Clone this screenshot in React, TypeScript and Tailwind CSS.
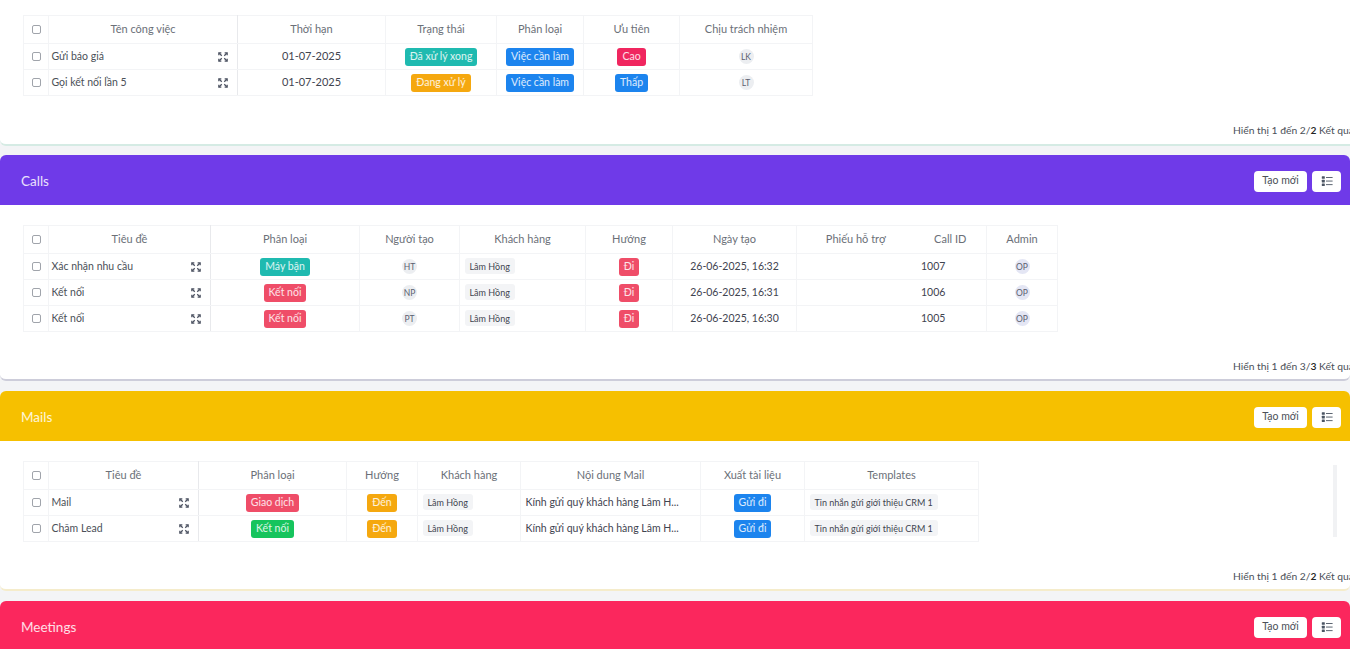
import type { ReactNode } from 'react';

function Check() {
  return <span className="block mx-auto w-[9px] h-[9px] rounded-[2px] border border-[#a0a4ab] bg-white" />;
}

function Badge({ color, children }: { color: string; children: ReactNode }) {
  return (
    <span className={`inline-flex items-center h-[18px] px-[5px] rounded-[3px] text-[10.5px] leading-none text-white/85 whitespace-nowrap ${color}`}>
      {children}
    </span>
  );
}

function Pill({ children }: { children: ReactNode }) {
  return (
    <span className="inline-flex items-center h-[16px] px-[5px] rounded-[3px] bg-[#f3f4f6] text-[9px] leading-none text-[#3f4450] whitespace-nowrap">
      {children}
    </span>
  );
}

function Avatar({ text, lilac }: { text: string; lilac?: boolean }) {
  return (
    <span
      className={`inline-flex items-center justify-center w-[15px] h-[15px] rounded-full text-[8.5px] leading-none text-[#5b6070] ${
        lilac ? 'bg-[#e4e6f4]' : 'bg-[#eceef1]'
      }`}
    >
      {text}
    </span>
  );
}

function ListIcon() {
  return (
    <svg viewBox="0 0 12 12" className="w-[12px] h-[12px] text-[#4b5563]" fill="currentColor">
      <rect x="0.8" y="1.2" width="3" height="2.6" rx="0.5" />
      <rect x="0.8" y="4.8" width="3" height="2.6" rx="0.5" />
      <rect x="0.8" y="8.4" width="3" height="2.6" rx="0.5" />
      <rect x="5" y="2" width="6.6" height="0.9" />
      <rect x="5" y="5.6" width="6.6" height="0.9" />
      <rect x="5" y="9.2" width="6.6" height="0.9" />
    </svg>
  );
}

function ExpandIcon() {
  return (
    <svg viewBox="0 0 12 12" className="w-[10px] h-[10px] text-[#4b5160]" fill="none" stroke="currentColor" strokeWidth="1.5">
      <path d="M1 4V1h3M8 1h3v3M11 8v3H8M4 11H1V8" />
      <path d="M1.5 1.5l3 3M10.5 1.5l-3 3M10.5 10.5l-3-3M1.5 10.5l3-3" />
    </svg>
  );
}

function Th({ children, strong, plain }: { children?: ReactNode; strong?: boolean; plain?: boolean }) {
  return (
    <th
      className={`h-[28px] p-0 text-center text-[11px] font-normal text-[#6b7078] border-b border-[#f3f4f6] ${
        plain ? '' : 'border-r'
      } ${strong ? 'border-r-[#e8e9ec]' : ''}`}
    >
      {children}
    </th>
  );
}

function Td({
  children,
  center,
  strong,
  plain,
}: {
  children?: ReactNode;
  center?: boolean;
  strong?: boolean;
  plain?: boolean;
}) {
  return (
    <td
      className={`h-[26px] p-0 text-[10.5px] text-[#3f4450] border-b border-[#f3f4f6] whitespace-nowrap overflow-hidden ${
        plain ? '' : 'border-r'
      } ${center ? 'text-center' : 'px-[4.5px]'} ${strong ? 'border-r-[#e8e9ec]' : ''}`}
    >
      {children}
    </td>
  );
}

function NameCell({ title }: { title: string }) {
  return (
    <div className="flex items-center justify-between -ml-[2px] pr-[5px] text-[#4b5058]">
      <span>{title}</span>
      <ExpandIcon />
    </div>
  );
}

function Footer({ total }: { total: number }) {
  return (
    <div className="flex justify-end w-[1440px] text-[10.3px] leading-none text-[#4b5058] whitespace-nowrap">
      <span className="w-[207px]">
        Hiển thị 1 đến {total}/<b className="font-semibold text-[#222]">{total}</b> Kết quả
      </span>
    </div>
  );
}

function SectionHead({ title, color }: { title: string; color: string }) {
  return (
    <div className={`flex items-center justify-between h-[50px] pt-[2px] pl-[21px] pr-[9px] rounded-t-[6px] ${color}`}>
      <span className="mt-[1px] text-[13.5px] text-white/85">{title}</span>
      <div className="flex gap-[5px]">
        <button className="h-[21px] w-[53px] rounded-[4px] bg-white text-[10.5px] text-[#4b5058]">Tạo mới</button>
        <button className="flex items-center justify-center h-[21px] w-[29px] rounded-[4px] bg-white">
          <ListIcon />
        </button>
      </div>
    </div>
  );
}

const todoRows = [
  { name: 'Gửi báo giá', status: 'Đã xử lý xong', statusColor: 'bg-[#1fbab0]', prio: 'Cao', prioColor: 'bg-[#f0265f]', owner: 'LK' },
  { name: 'Gọi kết nối lần 5', status: 'Đang xử lý', statusColor: 'bg-[#f5a80f]', prio: 'Thấp', prioColor: 'bg-[#1c84ee]', owner: 'LT' },
];

const callRows = [
  { title: 'Xác nhận nhu cầu', kind: 'Máy bận', kindColor: 'bg-[#1fbab0]', by: 'HT', date: '26-06-2025, 16:32', id: '1007' },
  { title: 'Kết nối', kind: 'Kết nối', kindColor: 'bg-[#ef4d68]', by: 'NP', date: '26-06-2025, 16:31', id: '1006' },
  { title: 'Kết nối', kind: 'Kết nối', kindColor: 'bg-[#ef4d68]', by: 'PT', date: '26-06-2025, 16:30', id: '1005' },
];

const mailRows = [
  { title: 'Mail', kind: 'Giao dịch', kindColor: 'bg-[#ef4d68]' },
  { title: 'Chăm Lead', kind: 'Kết nối', kindColor: 'bg-[#16c45d]' },
];

export default function App() {
  return (
    <div className="h-[649px] overflow-hidden bg-[#f3f4f6] font-['Lato','Noto_Sans',sans-serif]">
      {/* Tasks, scrolled so only its body shows */}
      <section className="h-[146px] bg-white border-b-2 border-[#d5ebe4] rounded-bl-[6px] pt-[15px] pl-[23px]">
        <table className="table-fixed border-collapse w-[789px] border-t border-l border-[#f3f4f6]">
          <colgroup>
            <col className="w-[25px]" />
            <col className="w-[189px]" />
            <col className="w-[148px]" />
            <col className="w-[111px]" />
            <col className="w-[87px]" />
            <col className="w-[96px]" />
            <col className="w-[133px]" />
          </colgroup>
          <thead>
            <tr>
              <Th><Check /></Th>
              <Th strong>Tên công việc</Th>
              <Th>Thời hạn</Th>
              <Th>Trạng thái</Th>
              <Th>Phân loại</Th>
              <Th>Ưu tiên</Th>
              <Th>Chịu trách nhiệm</Th>
            </tr>
          </thead>
          <tbody>
            {todoRows.map((r) => (
              <tr key={r.name}>
                <Td center><Check /></Td>
                <Td strong><NameCell title={r.name} /></Td>
                <Td center><span className="text-[11px]">01-07-2025</span></Td>
                <Td center><Badge color={r.statusColor}>{r.status}</Badge></Td>
                <Td center><Badge color="bg-[#1c84ee]">Việc cần làm</Badge></Td>
                <Td center><Badge color={r.prioColor}>{r.prio}</Badge></Td>
                <Td center><Avatar text={r.owner} /></Td>
              </tr>
            ))}
          </tbody>
        </table>
        <div className="-ml-[23px] mt-[29px]"><Footer total={2} /></div>
      </section>

      {/* Calls */}
      <section className="mt-[9px]">
        <SectionHead title="Calls" color="bg-[#6f3ae8]" />
        <div className="h-[176px] bg-white border-b-2 border-[#cdcdda] rounded-b-[6px] pt-[20px] pl-[23px]">
          <table className="table-fixed border-collapse w-[1034px] border-t border-l border-[#f3f4f6]">
            <colgroup>
              <col className="w-[25px]" />
              <col className="w-[162px]" />
              <col className="w-[149px]" />
              <col className="w-[100px]" />
              <col className="w-[126px]" />
              <col className="w-[87px]" />
              <col className="w-[124px]" />
              <col className="w-[118px]" />
              <col className="w-[72px]" />
              <col className="w-[71px]" />
            </colgroup>
            <thead>
              <tr>
                <Th><Check /></Th>
                <Th strong>Tiêu đề</Th>
                <Th>Phân loại</Th>
                <Th>Người tạo</Th>
                <Th>Khách hàng</Th>
                <Th>Hướng</Th>
                <Th>Ngày tạo</Th>
                <Th plain>Phiếu hỗ trợ</Th>
                <Th>Call ID</Th>
                <Th>Admin</Th>
              </tr>
            </thead>
            <tbody>
              {callRows.map((r) => (
                <tr key={r.id}>
                  <Td center><Check /></Td>
                  <Td strong><NameCell title={r.title} /></Td>
                  <Td center><Badge color={r.kindColor}>{r.kind}</Badge></Td>
                  <Td center><Avatar text={r.by} /></Td>
                  <Td><Pill>Lâm Hồng</Pill></Td>
                  <Td center><Badge color="bg-[#ef4d68]">Đi</Badge></Td>
                  <Td center>{r.date}</Td>
                  <Td plain />
                  <Td><span className="ml-[2px]">{r.id}</span></Td>
                  <Td center><Avatar text="OP" lilac /></Td>
                </tr>
              ))}
            </tbody>
          </table>
          <div className="-ml-[23px] mt-[29px]"><Footer total={3} /></div>
        </div>
      </section>

      {/* Mails */}
      <section className="mt-[10px]">
        <SectionHead title="Mails" color="bg-[#f6c000]" />
        <div className="h-[150px] bg-white border-b-2 border-[#f5eccb] rounded-b-[6px] pt-[20px] pl-[23px]">
          <div className="flex">
            <table className="table-fixed border-collapse w-[955px] border-t border-l border-[#f3f4f6]">
              <colgroup>
                <col className="w-[25px]" />
                <col className="w-[150px]" />
                <col className="w-[148px]" />
                <col className="w-[71px]" />
                <col className="w-[103px]" />
                <col className="w-[180px]" />
                <col className="w-[104px]" />
                <col className="w-[174px]" />
              </colgroup>
              <thead>
                <tr>
                  <Th><Check /></Th>
                  <Th strong>Tiêu đề</Th>
                  <Th>Phân loại</Th>
                  <Th>Hướng</Th>
                  <Th>Khách hàng</Th>
                  <Th>Nội dung Mail</Th>
                  <Th>Xuất tài liệu</Th>
                  <Th>Templates</Th>
                </tr>
              </thead>
              <tbody>
                {mailRows.map((r) => (
                  <tr key={r.title}>
                    <Td center><Check /></Td>
                    <Td strong><NameCell title={r.title} /></Td>
                    <Td center><Badge color={r.kindColor}>{r.kind}</Badge></Td>
                    <Td center><Badge color="bg-[#f5a80f]">Đến</Badge></Td>
                    <Td><Pill>Lâm Hồng</Pill></Td>
                    <Td>Kính gửi quý khách hàng Lâm H...</Td>
                    <Td center><Badge color="bg-[#1c84ee]">Gửi đi</Badge></Td>
                    <Td><Pill>Tin nhắn gửi giới thiệu CRM 1</Pill></Td>
                  </tr>
                ))}
              </tbody>
            </table>
            <div className="ml-[354px] mt-[4px] w-[4px] h-[72px] bg-[#f1f2f4]" />
          </div>
          <div className="-ml-[23px] mt-[29px]"><Footer total={2} /></div>
        </div>
      </section>

      {/* Meetings */}
      <section className="mt-[10px]">
        <SectionHead title="Meetings" color="bg-[#fb275d]" />
      </section>
    </div>
  );
}
